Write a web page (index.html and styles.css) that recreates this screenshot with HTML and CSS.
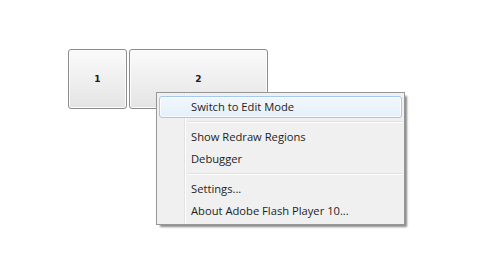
FILE: index.html
```html
<!DOCTYPE html>
<html>
<head>
<meta charset="utf-8">
<link rel="stylesheet" href="styles.css">
</head>
<body>
<div class="stage">
  <div class="buttons">
    <div class="btn btn-1">1</div>
    <div class="btn btn-2">2</div>
  </div>
  <div class="menu">
    <div class="item active">Switch to Edit Mode</div>
    <div class="sep"></div>
    <div class="item">Show Redraw Regions</div>
    <div class="item">Debugger</div>
    <div class="sep"></div>
    <div class="item">Settings...</div>
    <div class="item">About Adobe Flash Player 10...</div>
  </div>
</div>
</body>
</html>
```
FILE: styles.css
```css
html, body {
  margin: 0;
  padding: 0;
  background: #ffffff;
}
.stage {
  position: relative;
  width: 487px;
  height: 270px;
  overflow: hidden;
}
.buttons {
  display: flex;
  gap: 2px;
  padding: 49px 0 0 68px;
}
.btn {
  height: 60px;
  box-sizing: border-box;
  border: 1px solid #8c8c8c;
  border-radius: 3px;
  background: linear-gradient(#fbfbfb, #e4e4e4);
  box-shadow: inset 0 0 0 1px #fcfcfc;
  display: flex;
  align-items: center;
  justify-content: center;
  font-family: "DejaVu Sans", sans-serif;
  font-weight: bold;
  font-size: 9px;
  color: #1a1a1a;
}
.btn-1 { width: 59px; }
.btn-2 { width: 139px; }
.menu {
  position: absolute;
  left: 156px;
  top: 92px;
  width: 249px;
  box-sizing: border-box;
  border: 1px solid #979797;
  background: #f0f0f0;
  box-shadow: 3px 3px 2px -1px #8a8a8a;
  padding: 3px 2px 2px 2px;
  font-family: "Segoe UI", "Open Sans", sans-serif;
  font-size: 11.2px;
  color: #1e1e1e;
  background-image: linear-gradient(to right, transparent 27px, #e2e3e3 27px, #e2e3e3 28px, #ffffff 28px, #ffffff 29px, transparent 29px);
}
.item {
  height: 22px;
  line-height: 20px;
  padding-left: 31px;
  box-sizing: border-box;
  border: 1px solid transparent;
  border-radius: 3px;
  white-space: nowrap;
}
.item.active {
  border-color: #a3c9ef;
  background: linear-gradient(#f2f7fd, #e5effa);
  box-shadow: inset 0 0 0 1px rgba(255,255,255,0.7);
}
.sep {
  height: 8px;
  margin-left: 29px;
  background: linear-gradient(transparent 3px, #e0e0e0 3px, #e0e0e0 4px, #ffffff 4px, #ffffff 5px, transparent 5px);
}
```
